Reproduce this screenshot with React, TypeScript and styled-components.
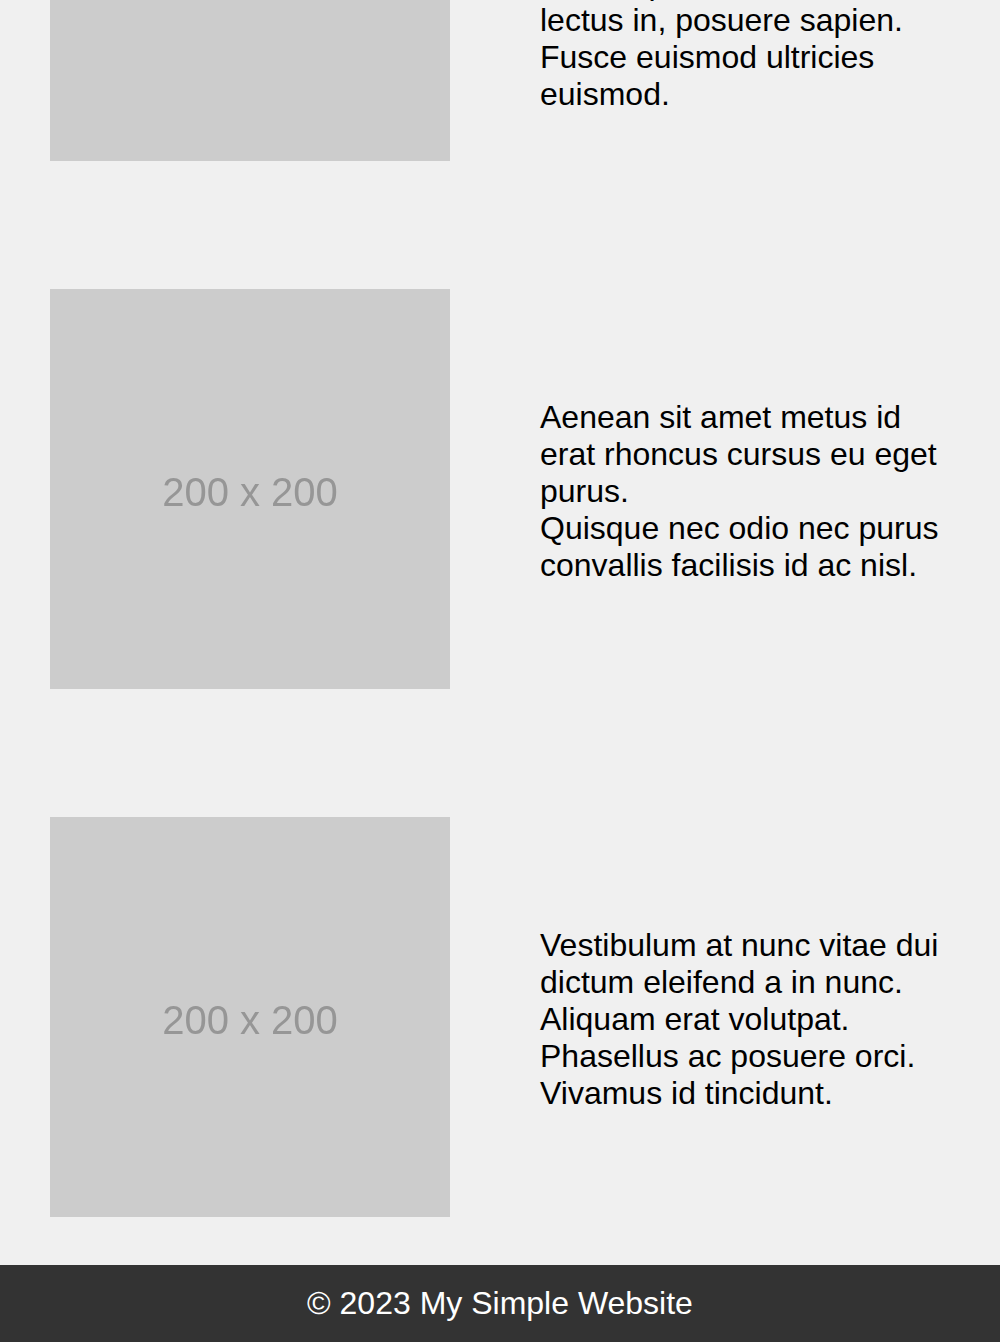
import React from "react";
import styled, { createGlobalStyle } from "styled-components";

const GlobalStyle = createGlobalStyle`
  html, body {
    margin: 0;
    padding: 0;
    background: #f0f0f0;
    font-family: "Liberation Sans", Arial, sans-serif;
    color: #000;
  }
`;

const Page = styled.div`
  display: flex;
  flex-direction: column;
  min-height: 100vh;
  overflow: hidden;
`;

const Main = styled.main`
  display: flex;
  flex-direction: column;
  gap: 128px;
  padding: 0 50px 48px;
  margin-top: -239px;
`;

const Row = styled.section`
  display: flex;
  align-items: center;
  gap: 90px;
`;

const Placeholder = styled.div`
  flex: none;
  width: 400px;
  height: 400px;
  background: #cccccc;
  display: flex;
  align-items: center;
  justify-content: center;
`;

const PlaceholderLabel = styled.span`
  font-size: 40px;
  color: #969696;
  filter: blur(0.5px);
  margin-top: 6px;
`;

const Text = styled.p<{ $shift?: number }>`
  margin: 0;
  width: 410px;
  padding-top: ${(p) => p.$shift ?? 5}px;
  font-size: 32px;
  line-height: normal;
`;

const Footer = styled.footer`
  background: #333333;
  color: #ffffff;
  text-align: center;
  padding: 20px 0;
  font-size: 32px;
  line-height: normal;
`;

const rows: { shift?: number; content: React.ReactNode }[] = [
  {
    shift: 7,
    content: (
      <>
        Lorem ipsum dolor sit amet,
        <br />
        consectetur adipiscing elit.
        <br />
        Sed non risus. Suspendisse
        <br />
        lorem ipsum, dignissim sit
        <br />
        Duis et pretium nisl ut
        <br />
        lectus in, posuere sapien. Fusce euismod ultricies euismod.
      </>
    ),
  },
  {
    content: (
      <>
        Aenean sit amet metus id erat rhoncus cursus eu eget purus.
        <br />
        Quisque nec odio nec purus convallis facilisis id ac nisl.
      </>
    ),
  },
  {
    content: (
      <>
        Vestibulum at nunc vitae dui dictum eleifend a in nunc. Aliquam erat
        volutpat. Phasellus ac posuere orci. Vivamus id tincidunt.
      </>
    ),
  },
];

export default function App() {
  return (
    <>
      <GlobalStyle />
      <Page>
        <Main>
          {rows.map((row, i) => (
            <Row key={i}>
              <Placeholder>
                <PlaceholderLabel>200 x 200</PlaceholderLabel>
              </Placeholder>
              <Text $shift={row.shift}>{row.content}</Text>
            </Row>
          ))}
        </Main>
        <Footer>© 2023 My Simple Website</Footer>
      </Page>
    </>
  );
}
